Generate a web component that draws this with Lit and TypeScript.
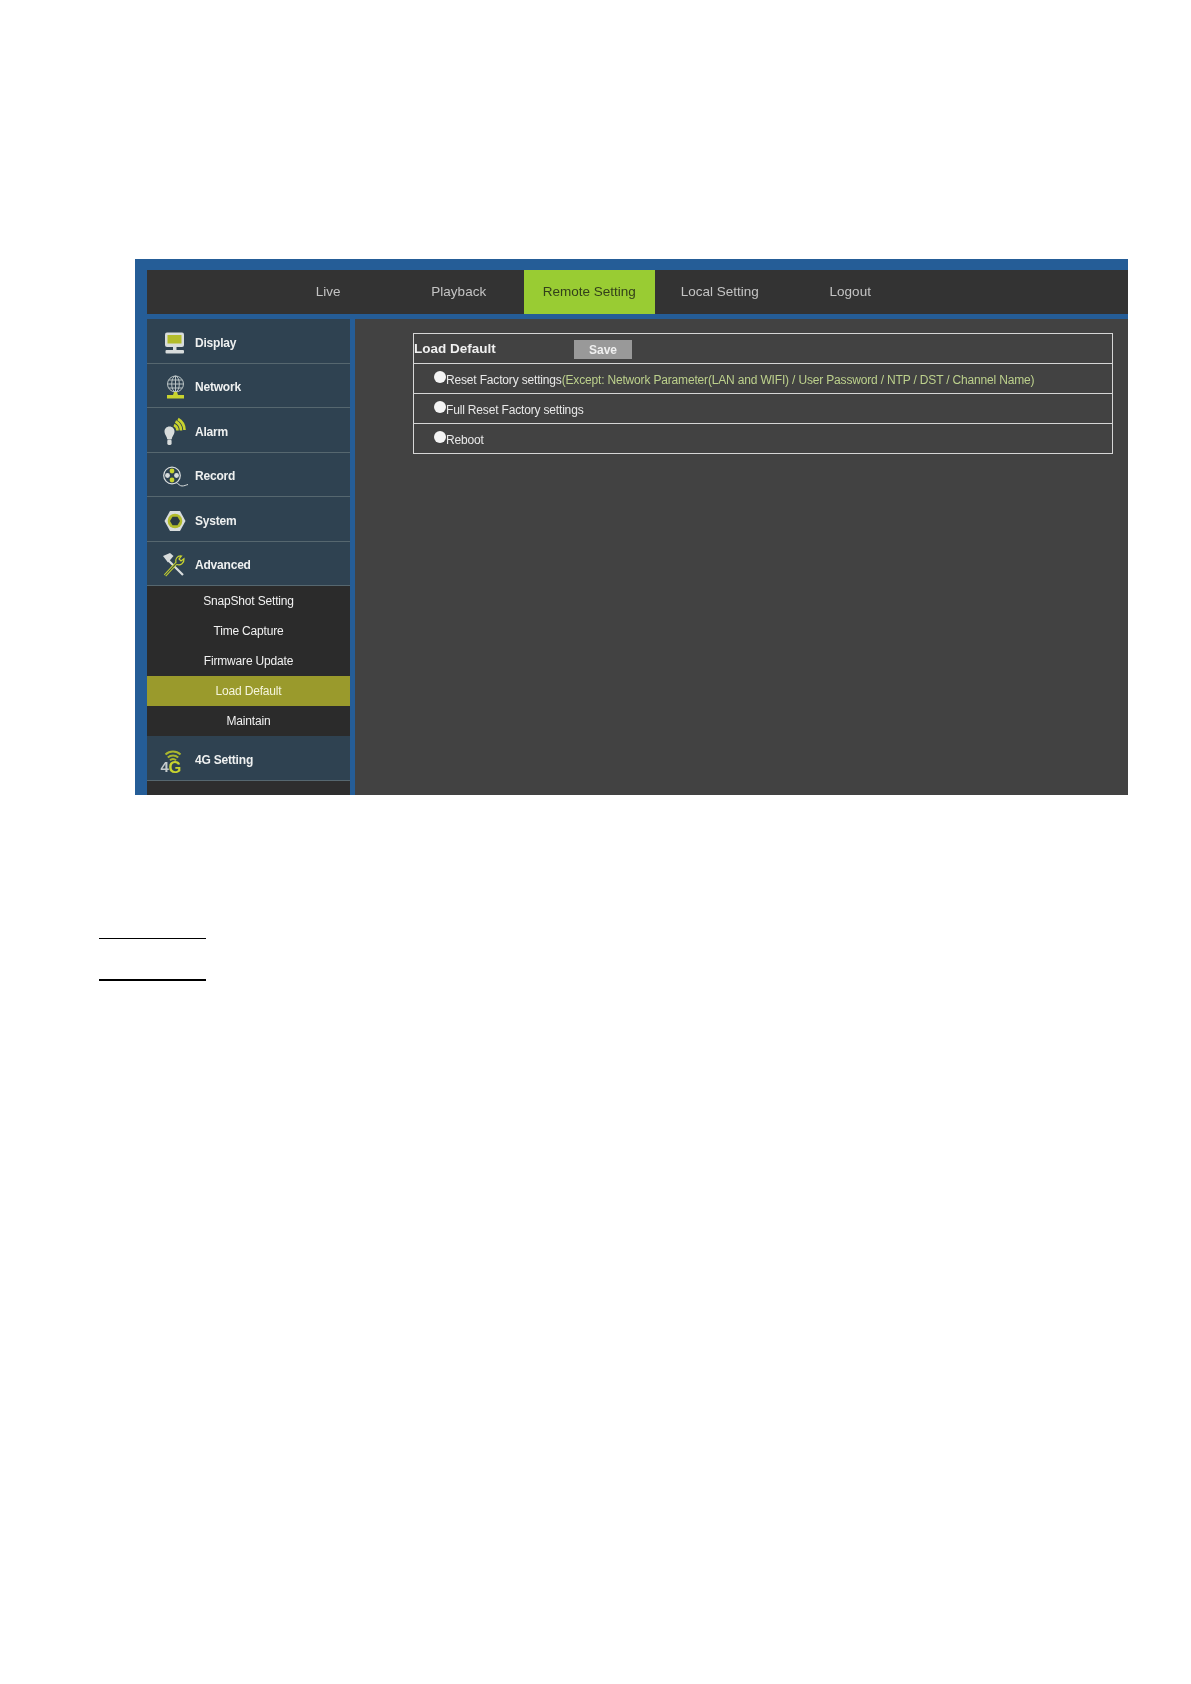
import { LitElement, html, css, svg } from "lit";
import { customElement } from "lit/decorators.js";

const G = "#c8d32f";
const W = "#d8dcdc";

const icons: Record<string, unknown> = {
  display: svg`<rect x="5" y="4.500" width="19" height="14.500" rx="2" fill="${W}"/><rect x="7.500" y="7" width="14" height="8.500" fill="#b3bc2b"/><rect x="13" y="19" width="3.500" height="3" fill="${W}"/><rect x="5.500" y="22" width="18.500" height="3.500" rx="1" fill="${W}"/>`,
  network: svg`<g fill="none" stroke="#b9c2c4" stroke-width="1"><circle cx="15.500" cy="12" r="8"/><ellipse cx="15.500" cy="12" rx="3.800" ry="8"/><path d="M15.500 4v16M7.500 12h16M8.700 8h13.600M8.700 16h13.600"/></g><path d="M14 20h3l1 3h6v3.500H7V23h6z" fill="${G}"/>`,
  alarm: svg`<path d="M9.500 9.500c3 0 5 2.200 5 5 0 3.200-2.300 4.300-2.700 7.800H7.200C6.800 18.800 4.500 17.700 4.500 14.500c0-2.800 2-5 5-5z" fill="${W}"/><rect x="7.300" y="22.500" width="4.300" height="5.500" rx="1.400" fill="${W}"/><g fill="none" stroke="${G}" stroke-width="2.600"><path d="M14 8a6 6 0 0 1 3.500 5.500"/><path d="M15.500 4.500a10 10 0 0 1 5.500 9"/><path d="M18 2a13 13 0 0 1 6.500 11"/></g>`,
  record: svg`<circle cx="12" cy="14.500" r="8.300" fill="none" stroke="${W}" stroke-width="1.200"/><circle cx="12" cy="10" r="2.400" fill="${G}"/><circle cx="12" cy="19" r="2.400" fill="${G}"/><circle cx="7.500" cy="14.500" r="2.400" fill="${W}"/><circle cx="16.500" cy="14.500" r="2.400" fill="${W}"/><path d="M16 21.500c2.500 1 3.500 3.500 6 3.500 2.300 0 4-1 6-1.500" fill="none" stroke="${W}" stroke-width="1"/>`,
  system: svg`<path d="M10 5h10l5.500 10-5.500 10H10L4.500 15z" fill="${W}"/><circle cx="15" cy="15" r="7.300" fill="#b3bc2b"/><path d="M12.500 10.800h5L20 15l-2.500 4.200h-5L10 15z" fill="#2b3a42"/>`,
  advanced: svg`<g transform="translate(-2 1)"><path d="M10 9l15 15" stroke="${W}" stroke-width="2.200"/><path d="M5 5l7-3 3.500 3-5.500 6.500z" fill="${W}"/><path d="M7 24.500l12.500-13.500" stroke="${G}" stroke-width="3" fill="none"/><path d="M7 24.500l12.500-13.500" stroke="#2f4251" stroke-width="1.100" fill="none"/><path d="M18 12c-1.300-3.500 1-7.500 5.500-7l-2.500 3 2 2 3-2.300c.4 4.300-3.500 7.300-7 5.800" fill="#2f4251" stroke="${G}" stroke-width="1.200"/></g>`,
  g4: svg`<g fill="none" stroke="#a9b62e" stroke-width="2"><path d="M5.500 9.500a11 11 0 0 1 15 0"/><path d="M7.800 12.500a7.500 7.500 0 0 1 10.400 0"/><path d="M10 15.300a4 4 0 0 1 6 0"/></g><text x="0.500" y="27" font-family="Liberation Sans" font-size="15" fill="#c4cacc">4</text><text x="8.500" y="27.500" font-family="Liberation Sans" font-size="16.500" font-weight="bold" fill="${G}">G</text>`,
};

const NAV = ["Live", "Playback", "Remote Setting", "Local Setting", "Logout"];
const SUB = ["SnapShot Setting", "Time Capture", "Firmware Update", "Load Default", "Maintain"];

@customElement("app-root")
export class AppRoot extends LitElement {
  static styles = css`
    :host {
      display: block;
      font-family: "Liberation Sans", Arial, sans-serif;
      background: #fff;
      min-height: 1684px;
    }
    .page { padding: 259px 63px 0 135px; }
    .panel {
      background: #255d97;
      height: 536px;
      padding: 11px 0 0 12px;
      box-sizing: border-box;
      display: flex;
      flex-direction: column;
      filter: blur(0.35px);
    }
    .nav {
      height: 44px;
      background: #333333;
      display: flex;
      padding-left: 116px;
      flex: none;
    }
    .nav div {
      width: 130.5px;
      text-align: center;
      line-height: 44px;
      font-size: 13.5px;
      color: #c4c4c4;
    }
    .nav .on { background: #99cc33; color: #33401a; }
    .main { flex: 1; display: flex; gap: 5px; margin-top: 5px; min-height: 0; }
    .side { width: 203px; background: #2e2e2e; flex: none; overflow: hidden; }
    .row {
      height: 44.5px;
      box-sizing: border-box;
      background: #2f4251;
      border-bottom: 1px solid #56676f;
      display: flex;
      align-items: center;
      padding: 4px 0 0 13px;
      gap: 5px;
      color: #eef0f0;
      font-size: 12px;
      letter-spacing: -0.2px;
      font-weight: bold;
    }
    .row svg { width: 30px; height: 30px; flex: none; }
    .sub {
      height: 30px;
      line-height: 30px;
      text-align: center;
      font-size: 12px;
      letter-spacing: -0.18px;
      color: #f2f2f2;
      background: #2b2b2b;
    }
    .sub.on { background: #9a9a2c; color: #f5f5dc; }
    .content { flex: 1; background: #424242; padding: 14px 15px 0 58px; }
    .table { border: 1px solid #d6d6d6; }
    .tr {
      height: 30px;
      box-sizing: border-box;
      display: flex;
      align-items: center;
      border-top: 1px solid #d6d6d6;
      font-size: 12px;
      letter-spacing: -0.17px;
      color: #e8e8e8;
      padding: 2px 0 0 20px;
    }
    .tr:first-child { border-top: 0; height: 29px; padding: 0; letter-spacing: 0; }
    .title { width: 160px; font-size: 13.5px; font-weight: bold; color: #f0f0f0; }
    .save {
      width: 58px;
      height: 19px;
      line-height: 20px;
      margin-top: 2px;
      background: #999999;
      text-align: center;
      font-size: 12px;
      font-weight: bold;
      color: #f0f0f0;
    }
    .radio {
      width: 12px;
      height: 12px;
      border-radius: 50%;
      background: #f4f4f4;
      margin-top: -5px;
      flex: none;
    }
    .note { color: #bcd08c; }
    .rules { padding-left: 99px; width: 107px; }
    .rule1 { height: 1px; background: #000; margin-top: 143px; }
    .rule2 { height: 2px; background: #000; margin-top: 40px; }
  `;

  private item(key: string, label: string) {
    return html`<div class="row"><svg viewBox="0 0 30 30">${icons[key]}</svg><span>${label}</span></div>`;
  }

  render() {
    return html`
      <div class="page">
        <div class="panel">
          <div class="nav">
            ${NAV.map((n) => html`<div class=${n === "Remote Setting" ? "on" : ""}>${n}</div>`)}
          </div>
          <div class="main">
            <div class="side">
              ${this.item("display", "Display")}
              ${this.item("network", "Network")}
              ${this.item("alarm", "Alarm")}
              ${this.item("record", "Record")}
              ${this.item("system", "System")}
              ${this.item("advanced", "Advanced")}
              ${SUB.map((s) => html`<div class="sub ${s === "Load Default" ? "on" : ""}">${s}</div>`)}
              ${this.item("g4", "4G Setting")}
            </div>
            <div class="content">
              <div class="table">
                <div class="tr"><div class="title">Load Default</div><div class="save">Save</div></div>
                <div class="tr"><span class="radio"></span><span>Reset Factory settings</span><span class="note">(Except: Network Parameter(LAN and WIFI) / User Password / NTP / DST / Channel Name)</span></div>
                <div class="tr"><span class="radio"></span><span>Full Reset Factory settings</span></div>
                <div class="tr"><span class="radio"></span><span>Reboot</span></div>
              </div>
            </div>
          </div>
        </div>
      </div>
      <div class="rules"><div class="rule1"></div><div class="rule2"></div></div>
    `;
  }
}
